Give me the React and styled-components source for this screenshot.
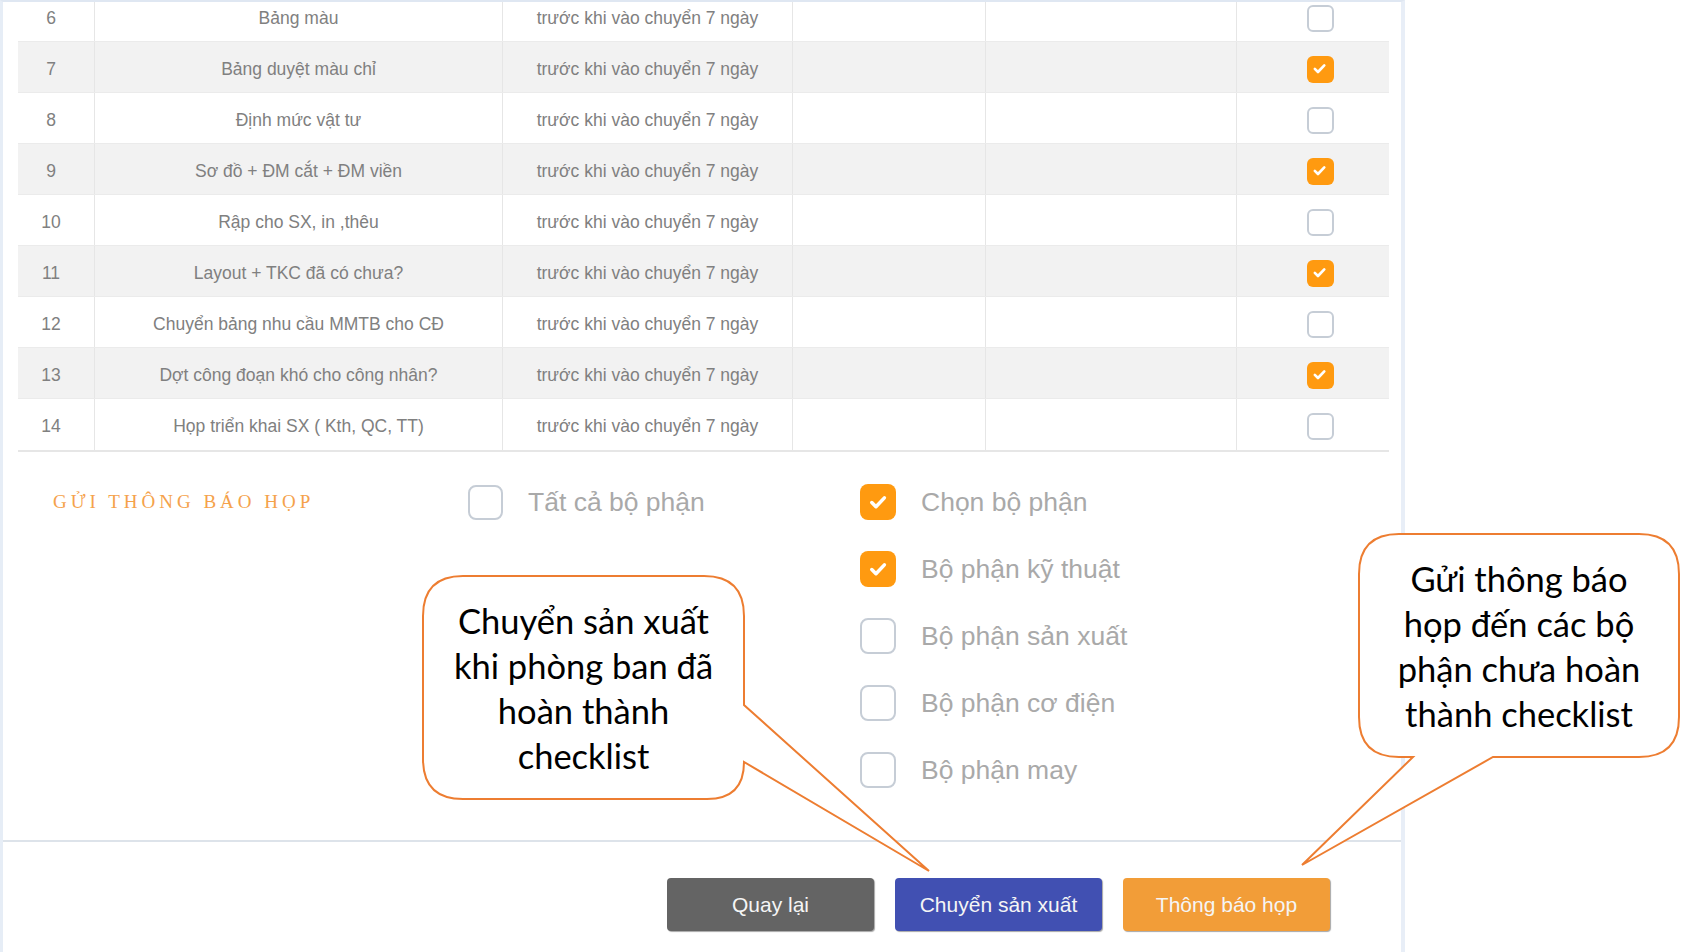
import React from "react";
import styled, { createGlobalStyle } from "styled-components";

const GlobalStyle = createGlobalStyle`
  *, *::before, *::after { box-sizing: border-box; }
  html, body { margin: 0; padding: 0; background: #fff; }
  body { font-family: "Liberation Sans", Arial, sans-serif; }
`;

const Page = styled.div`
  position: relative;
  width: 1681px;
  height: 952px;
  overflow: hidden;
  background: #fff;
`;

const Panel = styled.div`
  width: 1405px;
  height: 100%;
  border-top: 2px solid #dfe7f2;
  border-left: 3px solid #e6edf6;
  border-right: 4px solid #e8eef7;
  display: flex;
  flex-direction: column;
`;

const TableViewport = styled.div`
  padding: 0 12px 0 15px;
  overflow: hidden;
`;

const Table = styled.div`
  margin-top: -11px;
  border-bottom: 2px solid #e6e6e6;
`;

const Row = styled.div`
  display: grid;
  grid-template-columns: 76px 408px 290px 193px 251px 153px;
  height: 51px;
  background: ${(p) => (p.$striped ? "#f2f2f2" : "#fff")};
  border-bottom: 1px solid #ebebeb;

  &:last-child {
    border-bottom: none;
  }
`;

const Cell = styled.div`
  display: flex;
  align-items: center;
  justify-content: center;
  padding-top: 4px;
  padding-left: ${(p) => p.$shift || 0}px;
  padding-right: ${(p) => p.$pull || 0}px;
  font-size: 17.5px;
  color: #808080;
  white-space: nowrap;

  & + & {
    border-left: 1px solid #e6e6e6;
  }
`;

const Box = styled.span`
  display: inline-flex;
  align-items: center;
  justify-content: center;
  flex: none;
  width: ${(p) => p.$size}px;
  height: ${(p) => p.$size}px;
  border-radius: ${(p) => Math.round(p.$size / 4.5)}px;
  border: ${(p) => (p.$checked ? "none" : "2px solid #c6cdd6")};
  background: ${(p) => (p.$checked ? "#ff9a10" : "#fff")};
`;

const Check = ({ size }) => (
  <svg width={size * 0.56} height={size * 0.56} viewBox="0 0 24 24">
    <path
      d="M4.5 12.5l5 5L19.5 7"
      fill="none"
      stroke="#fff"
      strokeWidth="4.2"
      strokeLinecap="round"
      strokeLinejoin="round"
    />
  </svg>
);

const Checkbox = ({ checked, size }) => (
  <Box $checked={checked} $size={size}>
    {checked && <Check size={size} />}
  </Box>
);

const Notice = styled.div`
  display: grid;
  grid-template-columns: 415px 392px 1fr;
  align-items: start;
  padding: 32px 0 52px 50px;
  border-bottom: 2px solid #dde3ea;
`;

const NoticeTitle = styled.div`
  font-family: "Liberation Serif", "Times New Roman", serif;
  font-size: 19px;
  line-height: 36px;
  letter-spacing: 4px;
  color: #f5a24b;
`;

const OptionList = styled.div`
  display: flex;
  flex-direction: column;
  gap: 31px;
`;

const Option = styled.label`
  display: flex;
  align-items: center;
  gap: 25px;
  height: 36px;
  font-size: 26.5px;
  color: #a9a9a9;
`;

const Footer = styled.div`
  display: flex;
  justify-content: flex-end;
  gap: 21px;
  padding: 36px 71px 0 0;
`;

const Button = styled.button`
  width: 207px;
  height: 53px;
  border: none;
  border-radius: 4px;
  background: ${(p) => p.$bg};
  color: #f5f5f5;
  font-family: "Liberation Sans", Arial, sans-serif;
  font-size: 21px;
  box-shadow: 1px 1px 1px rgba(0, 0, 0, 0.35);
  cursor: pointer;
`;

const Overlay = styled.svg`
  position: absolute;
  left: 0;
  top: 0;
  pointer-events: none;
`;

const CalloutText = styled.div`
  position: absolute;
  left: ${(p) => p.$left}px;
  top: ${(p) => p.$top}px;
  width: ${(p) => p.$width}px;
  text-align: center;
  font-family: Lato, "Open Sans", sans-serif;
  font-size: 34.5px;
  line-height: 45px;
  color: #000;
  pointer-events: none;
`;

const rows = [
  [6, "Bảng màu", false],
  [7, "Bảng duyệt màu chỉ", true],
  [8, "Định mức vật tư", false],
  [9, "Sơ đồ + ĐM cắt + ĐM viền", true],
  [10, "Rập cho SX, in ,thêu", false],
  [11, "Layout + TKC đã có chưa?", true],
  [12, "Chuyển bảng nhu cầu MMTB cho CĐ", false],
  [13, "Dợt công đoạn khó cho công nhân?", true],
  [14, "Họp triển khai SX ( Kth, QC, TT)", false],
];

const departments = [
  ["Chọn bộ phận", true],
  ["Bộ phận kỹ thuật", true],
  ["Bộ phận sản xuất", false],
  ["Bộ phận cơ điện", false],
  ["Bộ phận may", false],
];

const bubbleLeft =
  "M463 576 H704 Q744 576 744 616 V705 L929 871 L744 762 Q744 799 707 799 H463 Q423 799 423 759 V616 Q423 576 463 576 Z";
const bubbleRight =
  "M1399 534 H1639 Q1679 534 1679 574 V717 Q1679 757 1639 757 H1493 L1302 865 L1413 757 H1399 Q1359 757 1359 717 V574 Q1359 534 1399 534 Z";

export default function App() {
  return (
    <Page>
      <GlobalStyle />
      <Panel>
        <TableViewport>
          <Table>
            {rows.map(([no, name, done], i) => (
              <Row key={no} $striped={i % 2 === 1}>
                <Cell $pull={10}>{no}</Cell>
                <Cell>{name}</Cell>
                <Cell>trước khi vào chuyển 7 ngày</Cell>
                <Cell />
                <Cell />
                <Cell $shift={14}>
                  <Checkbox checked={done} size={27} />
                </Cell>
              </Row>
            ))}
          </Table>
        </TableViewport>

        <Notice>
          <NoticeTitle>GỬI THÔNG BÁO HỌP</NoticeTitle>
          <OptionList>
            <Option>
              <Checkbox checked={false} size={35} />
              Tất cả bộ phận
            </Option>
          </OptionList>
          <OptionList>
            {departments.map(([label, on]) => (
              <Option key={label}>
                <Checkbox checked={on} size={36} />
                {label}
              </Option>
            ))}
          </OptionList>
        </Notice>

        <Footer>
          <Button $bg="#646464">Quay lại</Button>
          <Button $bg="#4150b2">Chuyển sản xuất</Button>
          <Button $bg="#f29d38">Thông báo họp</Button>
        </Footer>
      </Panel>

      <Overlay width="1681" height="952" viewBox="0 0 1681 952">
        <path d={bubbleLeft} fill="#fff" stroke="#ed7d31" strokeWidth="2" />
        <path d={bubbleRight} fill="#fff" stroke="#ed7d31" strokeWidth="2" />
      </Overlay>
      <CalloutText $left={423} $top={598} $width={321}>
        Chuyển sản xuất
        <br />
        khi phòng ban đã
        <br />
        hoàn thành
        <br />
        checklist
      </CalloutText>
      <CalloutText $left={1359} $top={556} $width={320}>
        Gửi thông báo
        <br />
        họp đến các bộ
        <br />
        phận chưa hoàn
        <br />
        thành checklist
      </CalloutText>
    </Page>
  );
}
